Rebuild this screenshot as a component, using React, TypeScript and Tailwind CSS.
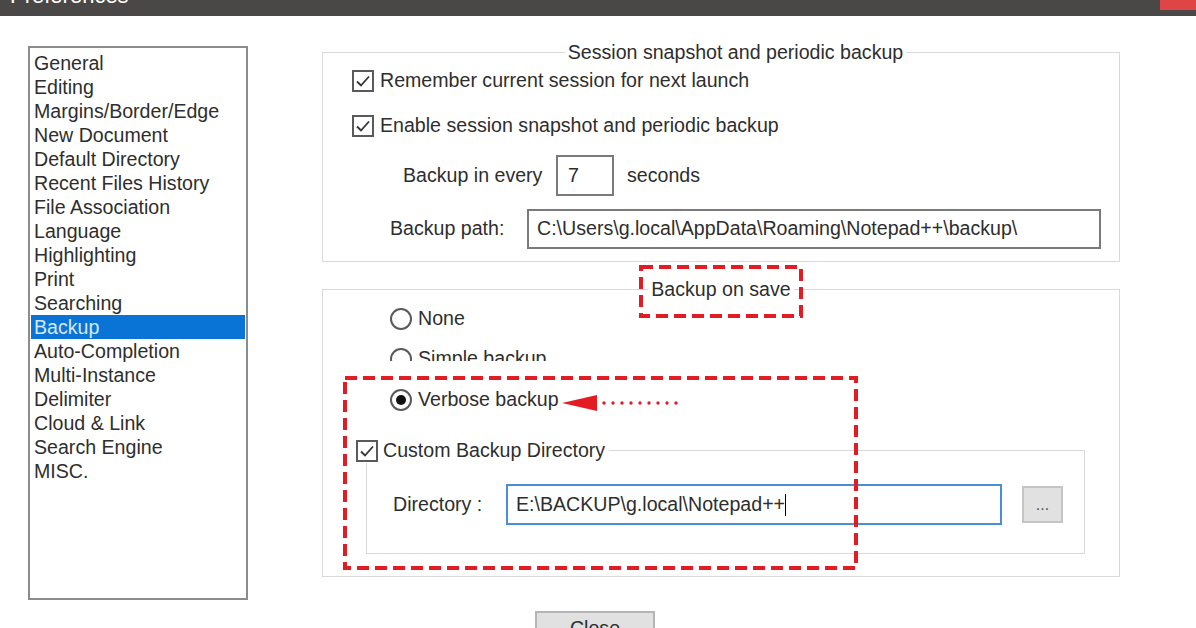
import React from "react";

const font = { fontFamily: '"Liberation Sans", Arial, sans-serif' };

const items = [
  "General",
  "Editing",
  "Margins/Border/Edge",
  "New Document",
  "Default Directory",
  "Recent Files History",
  "File Association",
  "Language",
  "Highlighting",
  "Print",
  "Searching",
  "Backup",
  "Auto-Completion",
  "Multi-Instance",
  "Delimiter",
  "Cloud & Link",
  "Search Engine",
  "MISC.",
];

const CheckBox = () => (
  <div className="w-[22px] h-[22px] border-2 border-[#5a5a5a] bg-white flex items-center justify-center shrink-0">
    <svg width="18" height="18" viewBox="0 0 18 18">
      <path d="M3 9.5 L7 13.5 L15 4.5" fill="none" stroke="#333" strokeWidth="1.8" />
    </svg>
  </div>
);

const Radio = ({ checked }: { checked?: boolean }) => (
  <div className="w-[22px] h-[22px] rounded-full border-2 border-[#5a5a5a] bg-white flex items-center justify-center shrink-0">
    {checked && <div className="w-[10px] h-[10px] rounded-full bg-[#111]" />}
  </div>
);

export default function App() {
  return (
    <div
      className="relative w-[1196px] h-[628px] overflow-hidden bg-white text-[19.6px] text-[#2e2e2e] flex flex-col"
      style={font}
    >
      {/* title bar */}
      <div className="h-[16px] bg-[#4a4846] flex justify-between overflow-hidden shrink-0">
        <span className="block pl-[10px] -mt-[16px] leading-[24px] text-[22px] text-white">Preferences</span>
        <div className="w-[36px] h-[10px] bg-[#e04545]" />
      </div>

      <div className="flex">
        {/* category list */}
        <div className="ml-[28px] mt-[30px] w-[220px] h-[554px] border-2 border-[#8c8c8c] pt-[3px] px-[1px] shrink-0">
          {items.map((it) => (
            <div
              key={it}
              className={
                it === "Backup"
                  ? "h-[24px] leading-[24px] pl-[3px] bg-[#0a74d6] text-[#d6e8fa]"
                  : "h-[24px] leading-[24px] pl-[3px]"
              }
            >
              {it}
            </div>
          ))}
        </div>

        {/* right side */}
        <div className="ml-[74px] mt-[25px] w-[798px] flex flex-col">
          <fieldset className="border border-[#d9d9d9] pl-[29px] pb-[12px]">
            <legend className="mx-auto px-[3px] leading-[22px]">Session snapshot and periodic backup</legend>
            <div className="mt-[6px] h-[24px] flex items-center gap-[6px]">
              <CheckBox />
              <span>Remember current session for next launch</span>
            </div>
            <div className="mt-[21px] h-[24px] flex items-center gap-[6px]">
              <CheckBox />
              <span>Enable session snapshot and periodic backup</span>
            </div>
            <div className="mt-[17px] h-[41px] flex items-center pl-[51px]">
              <span className="w-[153px]">Backup in every</span>
              <div className="w-[58px] h-[41px] border-2 border-[#7a7a7a] pl-[10px] flex items-center">7</div>
              <span className="ml-[13px]">seconds</span>
            </div>
            <div className="mt-[13px] h-[40px] flex items-center pl-[38px]">
              <span className="w-[137px]">Backup path:</span>
              <div className="w-[574px] h-[40px] border-2 border-[#7a7a7a] pl-[8px] flex items-center">
                C:\Users\g.local\AppData\Roaming\Notepad++\backup\
              </div>
            </div>
          </fieldset>

          <fieldset className="mt-[16px] border border-[#d9d9d9] pb-[22px]">
            <legend className="mx-auto px-[3px] leading-[22px]">Backup on save</legend>
            <div className="pl-[67px]">
              <div className="mt-[7px] h-[24px] flex items-center gap-[6px]">
                <Radio />
                <span>None</span>
              </div>
              <div className="mt-[16px] h-[14px] overflow-hidden">
                <div className="h-[24px] flex items-center gap-[6px]">
                  <Radio />
                  <span>Simple backup</span>
                </div>
              </div>
              <div className="mt-[27px] h-[24px] flex items-center gap-[6px]">
                <Radio checked />
                <span>Verbose backup</span>
              </div>
            </div>

            <div className="relative mt-[38px] ml-[43px] mr-[34px] h-[104px] border border-[#d9d9d9] pt-[33px] pl-[26px]">
              <div className="absolute -left-[11px] -top-[12px] h-[24px] flex items-center gap-[5px] bg-white pr-[4px]">
                <CheckBox />
                <span>Custom Backup Directory</span>
              </div>
              <div className="flex items-center">
                <span className="w-[113px]">Directory :</span>
                <div className="w-[496px] h-[41px] border-2 border-[#4a8fd6] pl-[8px] flex items-center">
                  E:\BACKUP\g.local\Notepad++<span className="inline-block w-[1px] h-[22px] bg-black" />
                </div>
                <div className="ml-[20px] w-[41px] h-[37px] bg-[#e1e1e1] border-2 border-[#c4c4c4] flex items-center justify-center text-[#555] text-[16px] leading-none">
                  ...
                </div>
              </div>
            </div>
          </fieldset>

          <div className="mt-[34px] ml-[213px] w-[120px] h-[36px] bg-[#e1e1e1] border-2 border-[#b5b5b5] flex items-center justify-center">
            Close
          </div>
        </div>
      </div>

      {/* annotations */}
      <svg className="absolute left-0 top-0 pointer-events-none" width="1196" height="628">
        <rect x="641" y="267" width="160" height="49" fill="none" stroke="#e31b23" strokeWidth="4" strokeDasharray="12 6" />
        <rect x="345" y="378" width="511" height="190" fill="none" stroke="#e31b23" strokeWidth="4" strokeDasharray="12 6" />
        <polygon points="562,403 597,395 597,411" fill="#e31b23" />
        {[604, 613, 622, 631, 640, 649, 658, 667, 676].map((x) => (
          <circle key={x} cx={x} cy={403} r={1.7} fill="#e31b23" />
        ))}
      </svg>
    </div>
  );
}
